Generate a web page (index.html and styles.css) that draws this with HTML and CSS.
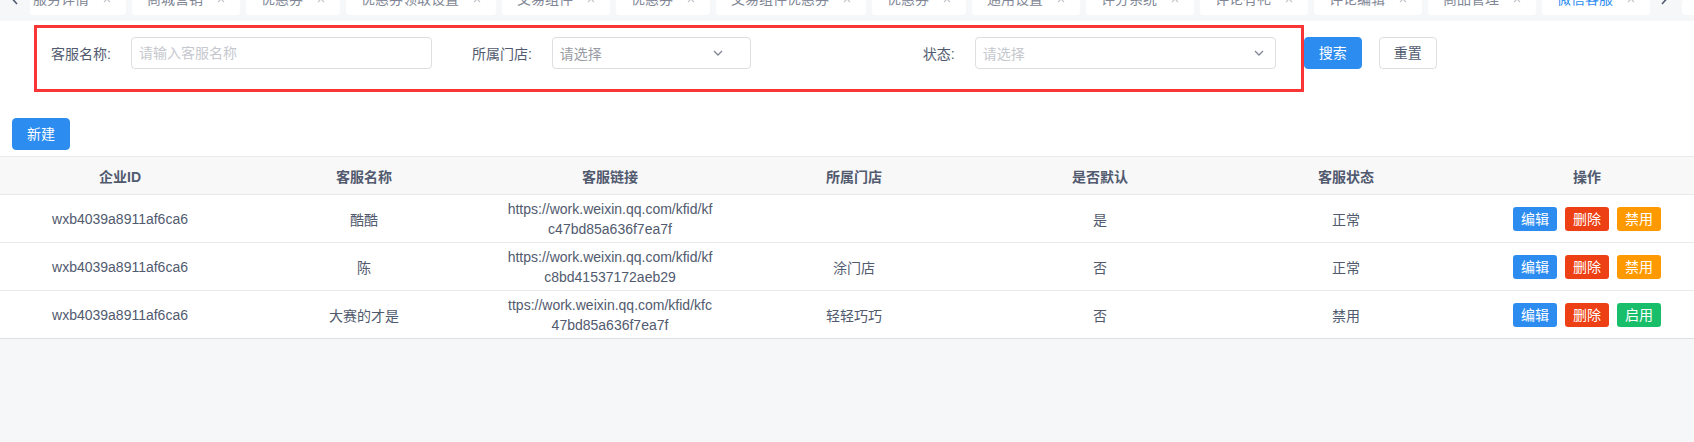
FILE: index.html
```html
<!DOCTYPE html>
<html lang="zh-CN">
<head>
<meta charset="utf-8">
<title>微信客服</title>
<link rel="stylesheet" href="styles.css">
</head>
<body>
<div class="tabbar">
  <div class="tab-arrow">
    <svg width="8" height="12" viewBox="0 0 8 12"><path d="M6 1 L1.5 6 L6 11" fill="none" stroke="#515a6e" stroke-width="1.6"/></svg>
  </div>
  <div class="tab-scroll">
    <div class="tab-strip">
      <div class="tab"><span>服务详情</span><svg class="tab-close" viewBox="0 0 8 8"><path d="M1 1 L7 7 M7 1 L1 7"/></svg></div>
      <div class="tab"><span>商城营销</span><svg class="tab-close" viewBox="0 0 8 8"><path d="M1 1 L7 7 M7 1 L1 7"/></svg></div>
      <div class="tab"><span>优惠券</span><svg class="tab-close" viewBox="0 0 8 8"><path d="M1 1 L7 7 M7 1 L1 7"/></svg></div>
      <div class="tab"><span>优惠券领取设置</span><svg class="tab-close" viewBox="0 0 8 8"><path d="M1 1 L7 7 M7 1 L1 7"/></svg></div>
      <div class="tab"><span>交易组件</span><svg class="tab-close" viewBox="0 0 8 8"><path d="M1 1 L7 7 M7 1 L1 7"/></svg></div>
      <div class="tab"><span>优惠券</span><svg class="tab-close" viewBox="0 0 8 8"><path d="M1 1 L7 7 M7 1 L1 7"/></svg></div>
      <div class="tab"><span>交易组件优惠券</span><svg class="tab-close" viewBox="0 0 8 8"><path d="M1 1 L7 7 M7 1 L1 7"/></svg></div>
      <div class="tab"><span>优惠券</span><svg class="tab-close" viewBox="0 0 8 8"><path d="M1 1 L7 7 M7 1 L1 7"/></svg></div>
      <div class="tab"><span>通用设置</span><svg class="tab-close" viewBox="0 0 8 8"><path d="M1 1 L7 7 M7 1 L1 7"/></svg></div>
      <div class="tab"><span>评分系统</span><svg class="tab-close" viewBox="0 0 8 8"><path d="M1 1 L7 7 M7 1 L1 7"/></svg></div>
      <div class="tab"><span>评论有礼</span><svg class="tab-close" viewBox="0 0 8 8"><path d="M1 1 L7 7 M7 1 L1 7"/></svg></div>
      <div class="tab"><span>评论编辑</span><svg class="tab-close" viewBox="0 0 8 8"><path d="M1 1 L7 7 M7 1 L1 7"/></svg></div>
      <div class="tab"><span>商品管理</span><svg class="tab-close" viewBox="0 0 8 8"><path d="M1 1 L7 7 M7 1 L1 7"/></svg></div>
      <div class="tab tab-active"><span>微信客服</span><svg class="tab-close" viewBox="0 0 8 8"><path d="M1 1 L7 7 M7 1 L1 7"/></svg></div>
    </div>
  </div>
  <div class="tab-arrow tab-arrow-right">
    <svg width="8" height="12" viewBox="0 0 8 12"><path d="M2 1 L6.5 6 L2 11" fill="none" stroke="#515a6e" stroke-width="1.6"/></svg>
  </div>
  <div class="tab-more"></div>
</div>

<main class="content">
  <div class="search-row">
    <div class="search-box">
      <div class="field">
        <span class="field-label">客服名称:</span>
        <input class="input input-wide" type="text" placeholder="请输入客服名称">
      </div>
      <div class="field field-store">
        <span class="field-label">所属门店:</span>
        <div class="select select-narrow">
          <span class="select-text">请选择</span>
          <svg class="select-arrow" viewBox="0 0 10 6"><path d="M1 1 L5 5 L9 1"/></svg>
        </div>
      </div>
      <div class="field field-status">
        <span class="field-label">状态:</span>
        <div class="select select-wide">
          <span class="select-text select-placeholder">请选择</span>
          <svg class="select-arrow" viewBox="0 0 10 6"><path d="M1 1 L5 5 L9 1"/></svg>
        </div>
      </div>
    </div>
    <button class="btn btn-primary btn-search">搜索</button>
    <button class="btn btn-default btn-reset">重置</button>
  </div>

  <div class="toolbar">
    <button class="btn btn-primary">新建</button>
  </div>

  <div class="table-wrap">
    <div class="table">
      <div class="tr thead">
        <div class="td">企业ID</div>
        <div class="td">客服名称</div>
        <div class="td">客服链接</div>
        <div class="td">所属门店</div>
        <div class="td">是否默认</div>
        <div class="td">客服状态</div>
        <div class="td">操作</div>
      </div>
      <div class="tr">
        <div class="td">wxb4039a8911af6ca6</div>
        <div class="td">酷酷</div>
        <div class="td td-link">https://work.weixin.qq.com/kfid/kf<br>c47bd85a636f7ea7f</div>
        <div class="td"></div>
        <div class="td">是</div>
        <div class="td">正常</div>
        <div class="td td-actions">
          <button class="sbtn sbtn-blue">编辑</button>
          <button class="sbtn sbtn-red">删除</button>
          <button class="sbtn sbtn-orange">禁用</button>
        </div>
      </div>
      <div class="tr">
        <div class="td">wxb4039a8911af6ca6</div>
        <div class="td">陈</div>
        <div class="td td-link">https://work.weixin.qq.com/kfid/kf<br>c8bd41537172aeb29</div>
        <div class="td">涂门店</div>
        <div class="td">否</div>
        <div class="td">正常</div>
        <div class="td td-actions">
          <button class="sbtn sbtn-blue">编辑</button>
          <button class="sbtn sbtn-red">删除</button>
          <button class="sbtn sbtn-orange">禁用</button>
        </div>
      </div>
      <div class="tr tr-last">
        <div class="td">wxb4039a8911af6ca6</div>
        <div class="td">大赛的才是</div>
        <div class="td td-link">ttps://work.weixin.qq.com/kfid/kfc<br>47bd85a636f7ea7f</div>
        <div class="td">轻轻巧巧</div>
        <div class="td">否</div>
        <div class="td">禁用</div>
        <div class="td td-actions">
          <button class="sbtn sbtn-blue">编辑</button>
          <button class="sbtn sbtn-red">删除</button>
          <button class="sbtn sbtn-green">启用</button>
        </div>
      </div>
    </div>
  </div>
</main>
</body>
</html>
```

FILE: styles.css
```css
* {
  box-sizing: border-box;
}

html, body {
  margin: 0;
  padding: 0;
  background: #f5f7f9;
  font-family: "Liberation Sans", "Noto Sans CJK SC", sans-serif;
  font-size: 14px;
  color: #515a6e;
  overflow: hidden;
}

/* ---------- tab bar ---------- */
.tabbar {
  display: flex;
  height: 21px;
  overflow: hidden;
  background: #f5f7f9;
}

.tab-arrow {
  flex: 0 0 30px;
  height: 21px;
  display: flex;
  justify-content: center;
  align-items: flex-start;
}

.tab-arrow svg {
  margin-top: -7px;
}

.tab-arrow-right {
  flex: 0 0 24px;
}

.tab-scroll {
  flex: 1 1 auto;
  min-width: 0;
  overflow: hidden;
}

.tab-strip {
  display: flex;
  gap: 6px;
  margin-left: -12px;
  white-space: nowrap;
}

.tab {
  flex: 0 0 auto;
  display: flex;
  align-items: center;
  height: 32px;
  margin-top: -17px;
  padding: 0 15px;
  background: #fff;
  border-radius: 3px;
  color: #808695;
  font-size: 14px;
  line-height: 32px;
}

.tab-active {
  color: #2d8cf0;
}

.tab-close {
  width: 8px;
  height: 8px;
  margin-left: 14px;
  fill: none;
  stroke: #c0c3c9;
  stroke-width: 1.1;
}

.tab-more {
  flex: 0 0 12px;
  margin-left: 6px;
  height: 15px;
  background: #fff;
  border-radius: 3px 0 0 3px;
}

/* ---------- content ---------- */
.content {
  background: #fff;
}

.search-row {
  display: flex;
  align-items: flex-start;
  padding: 4px 0 0 34px;
}

.search-box {
  display: flex;
  align-items: center;
  border: 3px solid #f93535;
  padding: 9px 25px 20px 14px;
}

.field {
  display: flex;
  align-items: center;
}

.field-label {
  padding-right: 20px;
  white-space: nowrap;
  color: #515a6e;
}

.field-store {
  margin-left: 40px;
}

.field-status {
  margin-left: 172px;
}

.input,
.select {
  height: 32px;
  border: 1px solid #dcdee2;
  border-radius: 4px;
  background: #fff;
  font-family: "Liberation Sans", "Noto Sans CJK SC", sans-serif;
  font-size: 14px;
  color: #515a6e;
}

.input {
  padding: 0 7px;
  outline: none;
}

.input::placeholder {
  color: #c5c8ce;
}

.input-wide,
.select-wide {
  width: 301px;
}

.select-narrow {
  width: 199px;
}

.select {
  position: relative;
  display: flex;
  align-items: center;
  padding: 0 7px;
}

.select-text {
  color: #999ba3;
}

.select-placeholder {
  color: #c5c8ce;
}

.select-arrow {
  position: absolute;
  top: 12px;
  width: 10px;
  height: 6px;
  fill: none;
  stroke: #808695;
  stroke-width: 1.3;
}

.select-narrow .select-arrow {
  right: 27px;
}

.select-wide .select-arrow {
  right: 11px;
}

.btn {
  height: 32px;
  padding: 0 14px;
  border: 1px solid transparent;
  border-radius: 4px;
  font-family: "Liberation Sans", "Noto Sans CJK SC", sans-serif;
  font-size: 14px;
  line-height: 30px;
  cursor: pointer;
}

.btn-primary {
  background: #2d8cf0;
  border-color: #2d8cf0;
  color: #fff;
}

.btn-default {
  background: #fff;
  border-color: #dcdee2;
  color: #515a6e;
}

.btn-search {
  margin-top: 12px;
}

.btn-reset {
  margin-top: 12px;
  margin-left: 17px;
}

.toolbar {
  padding: 26px 0 0 12px;
}

.toolbar .btn {
  display: block;
}

/* ---------- table ---------- */
.table-wrap {
  margin-top: 6px;
  overflow: hidden;
}

.table {
  width: 1712px;
}

.tr {
  display: grid;
  grid-template-columns: 240px 248px 244px 244px 248px 244px 238px;
  height: 48px;
  border-bottom: 1px solid #e8eaec;
  background: #fff;
}

.thead {
  height: 39px;
  border-top: 1px solid #e8eaec;
  background: #f8f8f9;
  font-weight: bold;
}

.tr-last {
  border-bottom-color: #dcdee2;
}

.td {
  display: flex;
  align-items: center;
  justify-content: center;
  text-align: center;
  padding: 0 8px;
  white-space: nowrap;
}

.td-link {
  line-height: 20px;
}

.td-actions {
  gap: 8px;
}

.sbtn {
  height: 24px;
  padding: 0 8px;
  border: 0;
  border-radius: 3px;
  color: #fff;
  font-family: "Liberation Sans", "Noto Sans CJK SC", sans-serif;
  font-size: 14px;
  line-height: 24px;
  cursor: pointer;
}

.sbtn-blue {
  background: #2d8cf0;
}

.sbtn-red {
  background: #ed4014;
}

.sbtn-orange {
  background: #ff9900;
}

.sbtn-green {
  background: #19be6b;
}
```
